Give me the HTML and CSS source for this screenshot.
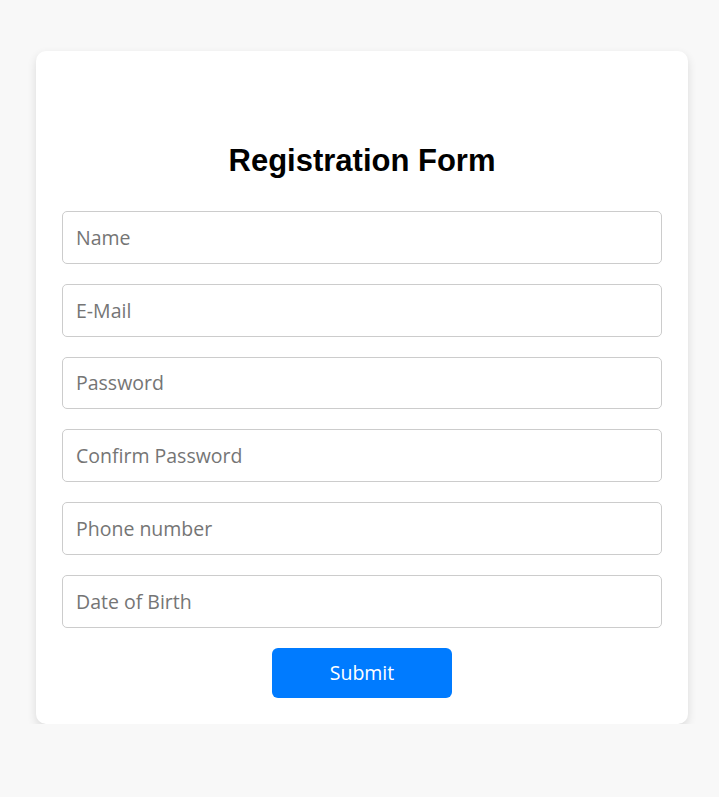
FILE: index.html
```html
<!DOCTYPE html>
<html lang="en">
<head>
<meta charset="utf-8">
<title>Registration Form</title>
<link rel="stylesheet" href="styles.css">
</head>
<body>
<div class="page">
  <form class="card">
    <h2 class="title">Registration Form</h2>
    <input class="field" type="text" placeholder="Name">
    <input class="field" type="text" placeholder="E-Mail">
    <input class="field" type="text" placeholder="Password">
    <input class="field" type="text" placeholder="Confirm Password">
    <input class="field" type="text" placeholder="Phone number">
    <input class="field" type="text" placeholder="Date of Birth">
    <button class="submit" type="button">Submit</button>
  </form>
</div>
</body>
</html>
```

FILE: styles.css
```css
html, body {
  margin: 0;
  padding: 0;
  background: #f8f8f8;
}
.page {
  padding: 51px 31px 0 36px;
}
.card {
  width: 652px;
  box-sizing: border-box;
  background: #fff;
  border-radius: 10px;
  box-shadow: 0 4px 10px rgba(0, 0, 0, 0.12);
  padding: 92px 26px 26px;
  display: flex;
  flex-direction: column;
  align-items: center;
  gap: 20px;
}
.title {
  margin: 0 0 12px;
  font-family: "Liberation Sans", Arial, sans-serif;
  font-weight: bold;
  font-size: 31px;
  line-height: 36px;
  color: #000;
}
.field {
  width: 600px;
  height: 52.8px;
  box-sizing: border-box;
  margin: 0;
  border: 1px solid #ccc;
  border-radius: 5px;
  padding: 0 13px;
  font-family: "Open Sans", sans-serif;
  font-size: 19.5px;
  color: #333;
  background: #fff;
  outline: none;
}
.field::placeholder {
  color: #757575;
}
.submit {
  width: 180px;
  height: 50px;
  border: none;
  border-radius: 6px;
  background: #007bff;
  color: #fff;
  font-family: "Open Sans", sans-serif;
  font-size: 19.5px;
  cursor: pointer;
}
```
